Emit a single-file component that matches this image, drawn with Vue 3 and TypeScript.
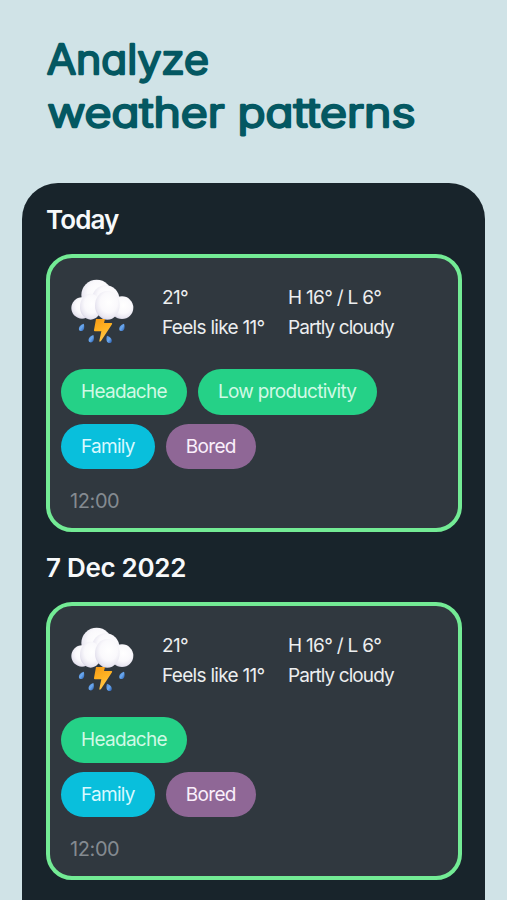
<script setup lang="ts">
interface Tag {
  label: string
  kind: 'symptom' | 'social' | 'mood'
}

interface Entry {
  day: string
  temperature: string
  feels: string
  range: string
  condition: string
  tagRows: Tag[][]
  time: string
}

const weather = {
  temperature: '21°',
  feels: 'Feels like 11°',
  range: 'H 16° / L 6°',
  condition: 'Partly cloudy',
  time: '12:00',
}

const secondRow: Tag[] = [
  { label: 'Family', kind: 'social' },
  { label: 'Bored', kind: 'mood' },
]

const entries: Entry[] = [
  {
    day: 'Today',
    ...weather,
    tagRows: [
      [
        { label: 'Headache', kind: 'symptom' },
        { label: 'Low productivity', kind: 'symptom' },
      ],
      secondRow,
    ],
  },
  {
    day: '7 Dec 2022',
    ...weather,
    tagRows: [[{ label: 'Headache', kind: 'symptom' }], secondRow],
  },
]
</script>

<template>
  <main class="page">
    <h1 class="title">
      <svg class="title-art" viewBox="0 0 440 120" width="440" height="120">
        <text x="1" y="48.3" textLength="162" lengthAdjust="spacingAndGlyphs">Analyze</text>
        <text x="1.5" y="100.5" textLength="368" lengthAdjust="spacingAndGlyphs">weather patterns</text>
      </svg>
    </h1>

    <div class="panel">
      <section v-for="entry in entries" :key="entry.day" class="entry">
        <h2 class="day">{{ entry.day }}</h2>
        <article class="card">
          <div class="summary">
            <svg class="icon" viewBox="0 0 255 240" aria-hidden="true">
              <defs>
                <radialGradient id="puff" cx=".56" cy=".4" r=".64">
                  <stop offset="0" stop-color="#ffffff" />
                  <stop offset=".55" stop-color="#faf9fc" />
                  <stop offset=".85" stop-color="#e9e7f1" />
                  <stop offset="1" stop-color="#d2cfe1" />
                </radialGradient>
                <linearGradient id="bolt" x1="0" y1="0" x2=".4" y2="1">
                  <stop offset="0" stop-color="#f79a16" />
                  <stop offset=".55" stop-color="#ffb323" />
                  <stop offset="1" stop-color="#ffc64d" />
                </linearGradient>
                <linearGradient id="drop" x1="0" y1="0" x2="1" y2="1">
                  <stop offset="0" stop-color="#4d86d6" />
                  <stop offset=".5" stop-color="#6aa8ee" />
                  <stop offset="1" stop-color="#2458ac" />
                </linearGradient>
              </defs>
              <circle cx="110" cy="75" r="46" fill="url(#puff)" />
              <circle cx="137" cy="87" r="41" fill="url(#puff)" />
              <circle cx="186" cy="113" r="34" fill="url(#puff)" />
              <circle cx="66" cy="114" r="32" fill="url(#puff)" />
              <ellipse cx="92" cy="110" rx="32" ry="39" fill="url(#puff)" />
              <ellipse cx="142" cy="106" rx="37" ry="43" fill="url(#puff)" />
              <path
                d="M108 147h27l-3 12h22q4 0 2 4l-33 50q-5 5-5-1l6-28h-19q-4 0-3-4z"
                fill="url(#bolt)"
              />
              <g fill="url(#drop)">
                <path d="M71 161C61 164 55 172 57 179C60 186 70 184 72 176C73 171 73 166 71 161z" />
                <path d="M100 195C90 198 84 206 86 213C89 220 99 218 101 210C102 205 102 200 100 195z" />
                <path d="M141 197C151 200 157 208 155 215C152 222 142 220 140 212C139 207 139 202 141 197z" />
                <path d="M192 161C182 164 176 172 178 179C181 186 191 184 193 176C194 171 194 166 192 161z" />
              </g>
            </svg>
            <div class="facts now">
              <span class="temperature">{{ entry.temperature }}</span>
              <span class="feels">{{ entry.feels }}</span>
            </div>
            <div class="facts">
              <span class="range">{{ entry.range }}</span>
              <span class="condition">{{ entry.condition }}</span>
            </div>
          </div>
          <div class="tags">
            <div v-for="(row, i) in entry.tagRows" :key="i" class="tag-row">
              <span v-for="tag in row" :key="tag.label" class="tag" :class="tag.kind">{{ tag.label }}</span>
            </div>
          </div>
          <time class="time">{{ entry.time }}</time>
        </article>
      </section>
    </div>
  </main>
</template>

<style>
body {
  margin: 0;
  background: #d0e3e7;
}
</style>

<style scoped>
.page {
  box-sizing: border-box;
  width: 507px;
  height: 900px;
  padding: 26px 22px 0;
  overflow: hidden;
  background: #d0e3e7;
  font-family: Inter, "Liberation Sans", sans-serif;
}

.title {
  height: 157px;
  margin: 0 0 0 24px;
}

.title-art {
  display: block;
}

.title-art text {
  font-size: 40.5px;
  font-weight: 300;
  font-feature-settings: "cv11";
  fill: #045862;
  stroke: #045862;
  stroke-width: 2.5px;
  stroke-linejoin: round;
}

.panel {
  box-sizing: border-box;
  width: 463px;
  height: 740px;
  padding: 0 23.5px 0 24px;
  border-radius: 36px 36px 0 0;
  background: #18242b;
}

.entry {
  height: 348.3px;
}

.day {
  height: 71px;
  margin: 0;
  color: #f7f9fa;
  font-size: 26px;
  font-weight: 600;
  line-height: 73px;
  letter-spacing: -0.3px;
}

.entry:first-child .day {
  letter-spacing: -0.9px;
}

.card {
  box-sizing: border-box;
  height: 278px;
  padding: 12px 10px 0;
  border: 4px solid #73eb95;
  border-radius: 26px;
  background: #30383f;
}

.summary {
  display: flex;
  height: 99px;
}

.icon {
  flex: none;
  width: 85px;
  height: 80px;
}

.facts {
  display: flex;
  flex-direction: column;
  padding-top: 12.8px;
  color: #eceeef;
  font-size: 19px;
  line-height: 29.7px;
  letter-spacing: -0.7px;
  white-space: nowrap;
}

.condition {
  letter-spacing: -0.92px;
}

.now {
  width: 126px;
  padding-left: 17px;
}

.tags {
  display: flex;
  flex-direction: column;
  gap: 9px;
  padding-left: 1px;
}

.tag-row {
  display: flex;
  gap: 10.8px;
}

.tag {
  box-sizing: border-box;
  height: 45.5px;
  padding: 0 20.2px 0 20px;
  border-radius: 23px;
  font-size: 19px;
  line-height: 45.5px;
  letter-spacing: -0.7px;
  white-space: nowrap;
}

.symptom {
  background: #25d187;
  color: #d0f9e5;
}

.social {
  background: #09bfdc;
  color: #d9f9ff;
}

.mood {
  background: #8f6796;
  color: #faeffb;
}

.time {
  display: block;
  padding: 17px 0 0 10px;
  color: #848a90;
  font-size: 20px;
  line-height: 30px;
  letter-spacing: -0.4px;
}
</style>
